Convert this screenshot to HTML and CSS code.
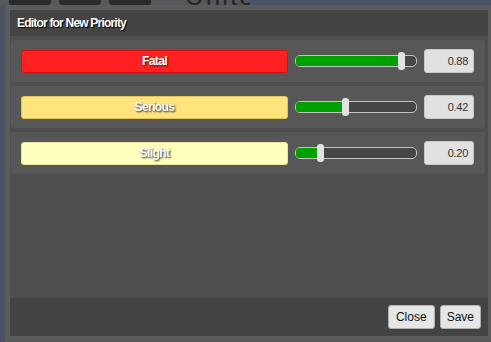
FILE: index.html
```html
<!DOCTYPE html>
<html lang="en">
<head>
  <meta charset="UTF-8">
  <title>Editor for New Priority</title>
  <link rel="stylesheet" href="styles.css">
</head>
<body>
  <div class="map">
    <div class="map-tabs">
      <span class="map-tab"></span>
      <span class="map-tab"></span>
      <span class="map-tab"></span>
      <span class="map-label">United</span>
    </div>
    <div class="map-sea"></div>
  </div>

  <div class="dialog">
    <div class="dlg-head">Editor for New Priority</div>

    <div class="dlg-body">
      <div class="prio-row">
        <div class="prio-bar fatal">Fatal</div>
        <div class="slider">
          <div class="slider-fill" style="width: 88%"></div>
          <div class="slider-thumb" style="left: 88%"></div>
        </div>
        <div class="prio-value">0.88</div>
      </div>

      <div class="prio-row">
        <div class="prio-bar serious">Serious</div>
        <div class="slider">
          <div class="slider-fill" style="width: 42%"></div>
          <div class="slider-thumb" style="left: 42%"></div>
        </div>
        <div class="prio-value">0.42</div>
      </div>

      <div class="prio-row">
        <div class="prio-bar slight">Slight</div>
        <div class="slider">
          <div class="slider-fill" style="width: 21%"></div>
          <div class="slider-thumb" style="left: 21%"></div>
        </div>
        <div class="prio-value">0.20</div>
      </div>
    </div>

    <div class="dlg-foot">
      <button class="btn">Close</button>
      <button class="btn">Save</button>
    </div>
  </div>
</body>
</html>
```

FILE: styles.css
```css
* { margin: 0; padding: 0; box-sizing: border-box; }
html, body { width: 100%; height: 100%; overflow: hidden; }
body {
  font-family: "Liberation Sans", Arial, sans-serif;
  background: #4d4f52;
  position: relative;
}

/* dimmed page behind the dialog */
.map {
  position: absolute;
  inset: 0;
  background: #55575a;
}
.map-tabs {
  display: flex;
  align-items: flex-start;
  height: 8px;
  padding-left: 9px;
  gap: 8px;
}
.map-tab {
  width: 42px;
  height: 5px;
  background: #2b2b2b;
  border-radius: 0 0 3px 3px;
}
.map-label {
  margin-left: 26px;
  margin-top: -15px;
  font-size: 26px;
  line-height: 22px;
  letter-spacing: 2px;
  color: #262626;
}
.map-sea {
  position: absolute;
  left: 250px;
  top: 0;
  right: 0;
  height: 5px;
  background: #4b5366;
}
.map::after {
  content: "";
  position: absolute;
  left: 0;
  top: 5px;
  width: 5px;
  bottom: 0;
  background: #4c5260;
}

.dialog {
  position: absolute;
  left: 5px;
  top: 5px;
  width: 488px;
  height: 336px;
  border: 5px solid #5c5c5c;
  background: #4e4e4e;
  display: flex;
  flex-direction: column;
}
.dlg-head {
  height: 26px;
  background: #444;
  color: #fff;
  font-size: 12px;
  font-weight: bold;
  letter-spacing: -0.8px;
  padding: 6px 0 0 7px;
  text-shadow: 1px 1px 1px #000;
}
.dlg-body {
  flex: 1;
  padding: 4px 3px 0 1px;
  display: flex;
  flex-direction: column;
  gap: 4px;
}
.prio-row {
  height: 42px;
  background: #575757;
  border-radius: 3px;
  display: flex;
  align-items: center;
  padding-left: 10px;
}
.prio-bar {
  width: 267px;
  height: 23px;
  border-radius: 3px;
  border: 1px solid;
  color: #fff;
  font-size: 12px;
  font-weight: bold;
  letter-spacing: -0.6px;
  text-align: center;
  line-height: 21px;
  text-shadow: 1px 1px 2px #222;
}
.fatal { background: #ff2121; border-color: #d81010; }
.serious { background: #ffe47e; border-color: #e4c35a; }
.slight { background: #ffffbe; border-color: #e6e4a0; }

.slider {
  position: relative;
  width: 122px;
  height: 12px;
  margin-left: 7px;
  border: 1px solid #c4c4c4;
  border-radius: 5px;
  background: #464646;
}
.slider-fill {
  height: 100%;
  background: #00a000;
  border-radius: 4px 0 0 4px;
}
.slider-thumb {
  position: absolute;
  top: -4px;
  width: 7px;
  height: 18px;
  margin-left: -4px;
  background: #e2e2e2;
  border-radius: 3px;
}
.prio-value {
  width: 50px;
  height: 24px;
  margin-left: 7px;
  background: #e1e1e1;
  border: 1px solid #c8c8c8;
  border-radius: 3px;
  color: #333;
  font-size: 11px;
  text-align: right;
  line-height: 22px;
  padding-right: 5px;
  letter-spacing: -0.3px;
}

.dlg-foot {
  height: 38px;
  background: #444;
  display: flex;
  justify-content: flex-end;
  align-items: center;
  gap: 5px;
  padding-right: 7px;
}
.btn {
  height: 24px;
  padding: 0 6px;
  font-family: "Liberation Sans", Arial, sans-serif;
  font-size: 12px;
  color: #111;
  background: #e6e6e6;
  border: 1px solid #b0b0b0;
  border-radius: 3px;
}
.btn:first-child { padding: 0 7px; }
```
